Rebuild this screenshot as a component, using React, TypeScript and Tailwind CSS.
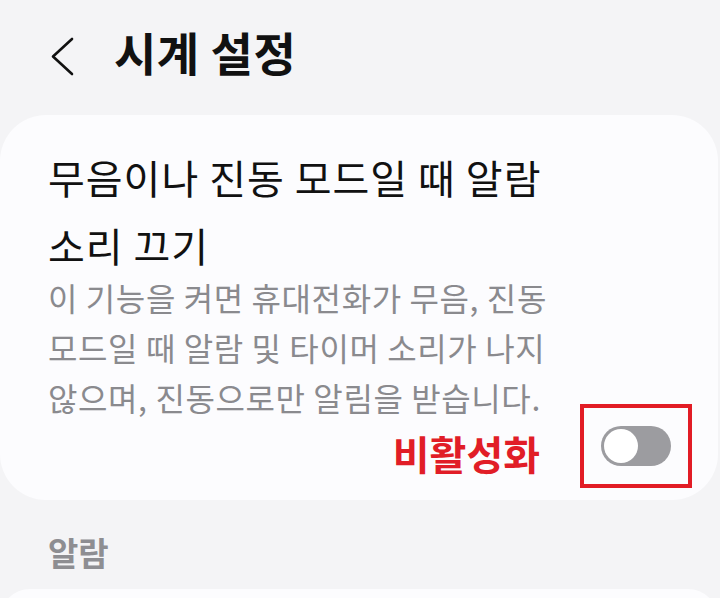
export default function App() {
  return (
    <div
      className="w-[720px] h-[598px] overflow-hidden bg-[#f4f4f6]"
      style={{ fontFamily: '"Noto Sans CJK KR", "Noto Sans", sans-serif' }}
    >
      {/* header */}
      <div className="flex h-[115px] items-center">
        <button className="ml-[50px] mt-[-4px] flex h-[40px] w-[26px] items-center" aria-label="뒤로">
          <svg width="26" height="40" viewBox="0 0 26 40" fill="none">
            <polyline
              points="22,3 3,20.5 22,38"
              stroke="#111"
              strokeWidth="2.6"
              strokeLinecap="round"
              strokeLinejoin="round"
            />
          </svg>
        </button>
        <h1 className="ml-[38px] mt-[-14px] text-[46px] font-bold leading-none tracking-[0.5px] text-[#111]">
          시계 설정
        </h1>
      </div>

      {/* setting card */}
      <div className="w-[718px] rounded-[46px] bg-[#fcfcfe] pl-[48px] pr-[26px] pt-[28px] pb-[12px]">
        <p className="text-[40px] leading-[68px] tracking-[1px] text-[#111]">
          무음이나 진동 모드일 때 알람
          <br />
          소리 끄기
        </p>
        <p className="mt-[-7px] text-[32px] leading-[50px] tracking-[0.6px] text-[#8a8a8e]">
          이 기능을 켜면 휴대전화가 무음, 진동
          <br />
          모드일 때 알람 및 타이머 소리가 나지
          <br />
          않으며, 진동으로만 알림을 받습니다.
        </p>
        <div className="mt-[-18px] flex items-center justify-end gap-[40px]">
          <span className="pt-[14px] text-[40px] font-bold leading-none text-[#e11d27]">
            비활성화
          </span>
          <div className="flex h-[84px] w-[112px] items-center justify-center border-[4px] border-[#e21c25]">
            <div className="flex h-[40px] w-[70px] items-center rounded-full bg-[#9c9ca0] p-[3px]">
              <div className="h-[34px] w-[34px] rounded-full bg-white" />
            </div>
          </div>
        </div>
      </div>

      {/* section */}
      <div className="pl-[48px] pt-[32px] text-[33px] font-bold leading-[40px] text-[#8e8e92]">
        알람
      </div>
      <div className="mt-[17px] h-[60px] w-[718px] rounded-[46px] bg-[#fcfcfe]" />
    </div>
  );
}
